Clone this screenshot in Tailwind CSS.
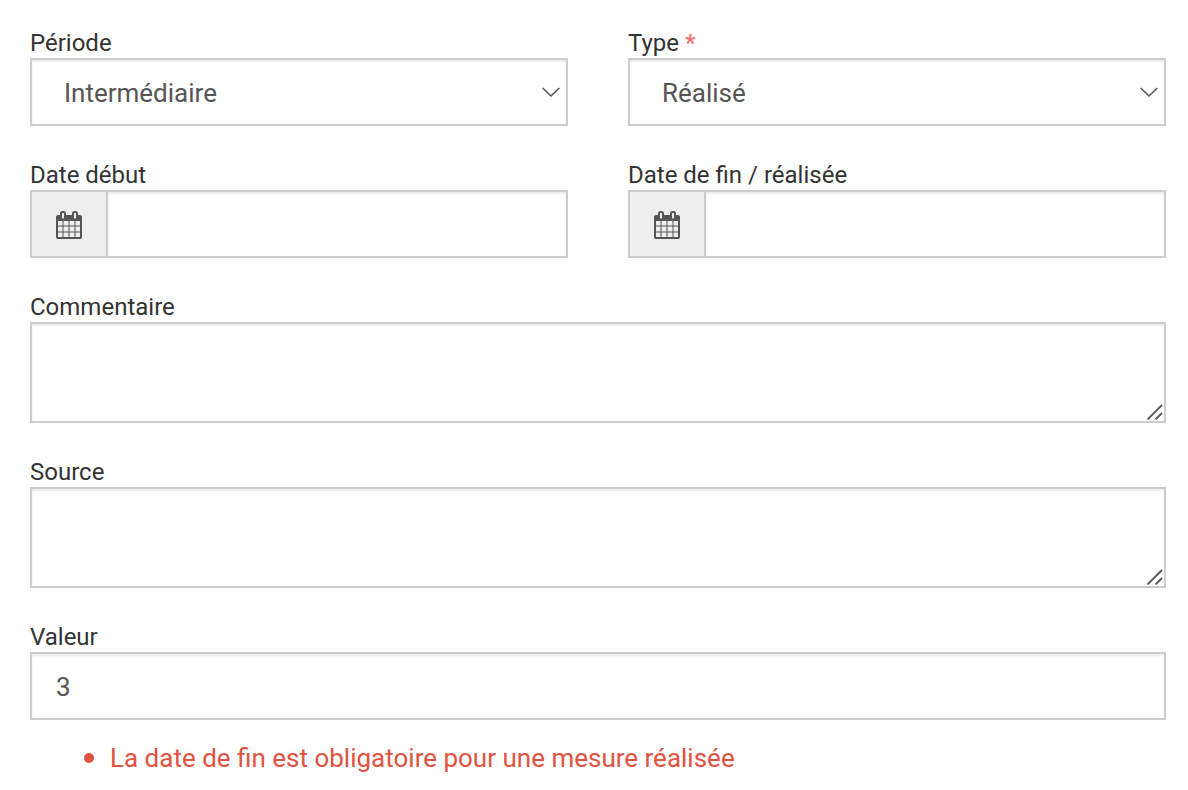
<!DOCTYPE html>
<html lang="fr">
<head>
<meta charset="utf-8">
<title>Mesure</title>
<script src="https://cdn.jsdelivr.net/npm/@tailwindcss/browser@4"></script>
</head>
<body class="bg-white text-[#333] font-['Roboto',sans-serif] text-[26px] leading-8">
<form class="pl-[30px] pr-[22px] pt-[26px] flex flex-col gap-8">
  <div class="grid grid-cols-2 gap-x-[60px] gap-y-8">
    <div>
      <label for="periode" class="block pt-0.5 text-2xl/[30px] font-[450]">Période</label>
      <div class="grid">
        <select id="periode" class="col-start-1 row-start-1 appearance-none w-full h-[68px] border-2 border-[#ccc] bg-white px-8 pt-0.5 text-[#555] shadow-[inset_0_2px_2px_rgba(0,0,0,0.075)]"><option>Intermédiaire</option></select>
        <svg class="col-start-1 row-start-1 self-center justify-self-end mr-2 pointer-events-none" width="18" height="12" viewBox="0 0 18 12" fill="none" stroke="#555" stroke-width="1.6"><path d="M.7 2l8.300 8 8.300-8"/></svg>
      </div>
    </div>
    <div>
      <label for="type" class="block pt-0.5 text-2xl/[30px] font-[450]">Type <span class="font-medium text-[#ee706b]">*</span></label>
      <div class="grid">
        <select id="type" class="col-start-1 row-start-1 appearance-none w-full h-[68px] border-2 border-[#ccc] bg-white px-8 pt-0.5 text-[#555] shadow-[inset_0_2px_2px_rgba(0,0,0,0.075)]"><option>Réalisé</option></select>
        <svg class="col-start-1 row-start-1 self-center justify-self-end mr-2 pointer-events-none" width="18" height="12" viewBox="0 0 18 12" fill="none" stroke="#555" stroke-width="1.6"><path d="M.7 2l8.300 8 8.300-8"/></svg>
      </div>
    </div>
    <div>
      <label for="debut" class="block pt-0.5 text-2xl/[30px] font-[450]">Date début</label>
      <div class="flex h-[68px]">
        <span class="w-[76px] shrink-0 border-2 border-r-0 border-[#ccc] bg-[#eee] pt-0.5 flex items-center justify-center">
          <svg width="26" height="28" viewBox="0 0 26 28"><use href="#cal"/></svg>
        </span>
        <input id="debut" type="text" class="flex-1 min-w-0 border-2 border-[#ccc] px-6 pt-0.5 text-[#555] shadow-[inset_0_2px_2px_rgba(0,0,0,0.075)]">
      </div>
    </div>
    <div>
      <label for="fin" class="block pt-0.5 text-2xl/[30px] font-[450]">Date de fin / réalisée</label>
      <div class="flex h-[68px]">
        <span class="w-[76px] shrink-0 border-2 border-r-0 border-[#ccc] bg-[#eee] pt-0.5 flex items-center justify-center">
          <svg width="26" height="28" viewBox="0 0 26 28"><use href="#cal"/></svg>
        </span>
        <input id="fin" type="text" class="flex-1 min-w-0 border-2 border-[#ccc] px-6 pt-0.5 text-[#555] shadow-[inset_0_2px_2px_rgba(0,0,0,0.075)]">
      </div>
    </div>
  </div>
  <div>
    <label for="commentaire" class="block pt-0.5 text-2xl/[30px] font-[450]">Commentaire</label>
    <div class="grid">
      <textarea id="commentaire" class="col-start-1 row-start-1 block w-full h-[101px] resize-none border-2 border-[#ccc] px-6 py-3 text-[#555] shadow-[inset_0_2px_2px_rgba(0,0,0,0.075)]"></textarea>
      <svg class="col-start-1 row-start-1 self-end justify-self-end mr-[3px] mb-[3px] pointer-events-none" width="16" height="16" viewBox="0 0 16 16" stroke="#555" stroke-width="1.8"><path d="M.5 15.500L15 1M8.500 15.500L15 9"/></svg>
    </div>
  </div>
  <div>
    <label for="source" class="block pt-0.5 text-2xl/[30px] font-[450]">Source</label>
    <div class="grid">
      <textarea id="source" class="col-start-1 row-start-1 block w-full h-[101px] resize-none border-2 border-[#ccc] px-6 py-3 text-[#555] shadow-[inset_0_2px_2px_rgba(0,0,0,0.075)]"></textarea>
      <svg class="col-start-1 row-start-1 self-end justify-self-end mr-[3px] mb-[3px] pointer-events-none" width="16" height="16" viewBox="0 0 16 16" stroke="#555" stroke-width="1.8"><path d="M.5 15.500L15 1M8.500 15.500L15 9"/></svg>
    </div>
  </div>
  <div>
    <label for="valeur" class="block pt-0.5 text-2xl/[30px] font-[450]">Valeur</label>
    <input id="valeur" type="text" value="3" class="block w-full h-[68px] border-2 border-[#ccc] px-6 pt-0.5 text-[#555] shadow-[inset_0_2px_2px_rgba(0,0,0,0.075)]">
    <ul class="mt-[22px] pl-[54px] text-[#e15241]"><li class="flex items-center gap-4 before:size-[10px] before:rounded-full before:bg-[#e15241]">La date de fin est obligatoire pour une mesure réalisée</li></ul>
  </div>
</form>
<svg class="hidden"><symbol id="cal" viewBox="0 0 1664 1792"><path fill="#555" d="M128 1664h288v-288h-288v288zM480 1664h320v-288h-320v288zM128 1312h288v-320h-288v320zM480 1312h320v-320h-320v320zM128 928h288v-288h-288v288zM864 1664h320v-288h-320v288zM480 928h320v-288h-320v288zM1248 1664h288v-288h-288v288zM864 1312h320v-320h-320v320zM512 448v-288q0-13-9.500-22.500t-22.500-9.500h-64q-13 0-22.500 9.500t-9.500 22.500v288q0 13 9.500 22.500t22.500 9.500h64q13 0 22.500-9.500t9.500-22.500zM1248 1312h288v-320h-288v320zM864 928h320v-288h-320v288zM1248 928h288v-288h-288v288zM1280 448v-288q0-13-9.500-22.500t-22.500-9.500h-64q-13 0-22.500 9.500t-9.500 22.500v288q0 13 9.500 22.500t22.500 9.500h64q13 0 22.500-9.500t9.500-22.500zM1664 384v1280q0 52-38 90t-90 38h-1408q-52 0-90-38t-38-90v-1280q0-52 38-90t90-38h128v-96q0-66 47-113t113-47h64q66 0 113 47t47 113v96h384v-96q0-66 47-113t113-47h64q66 0 113 47t47 113v96h128q52 0 90 38t38 90z"/></symbol></svg>
</body>
</html>
